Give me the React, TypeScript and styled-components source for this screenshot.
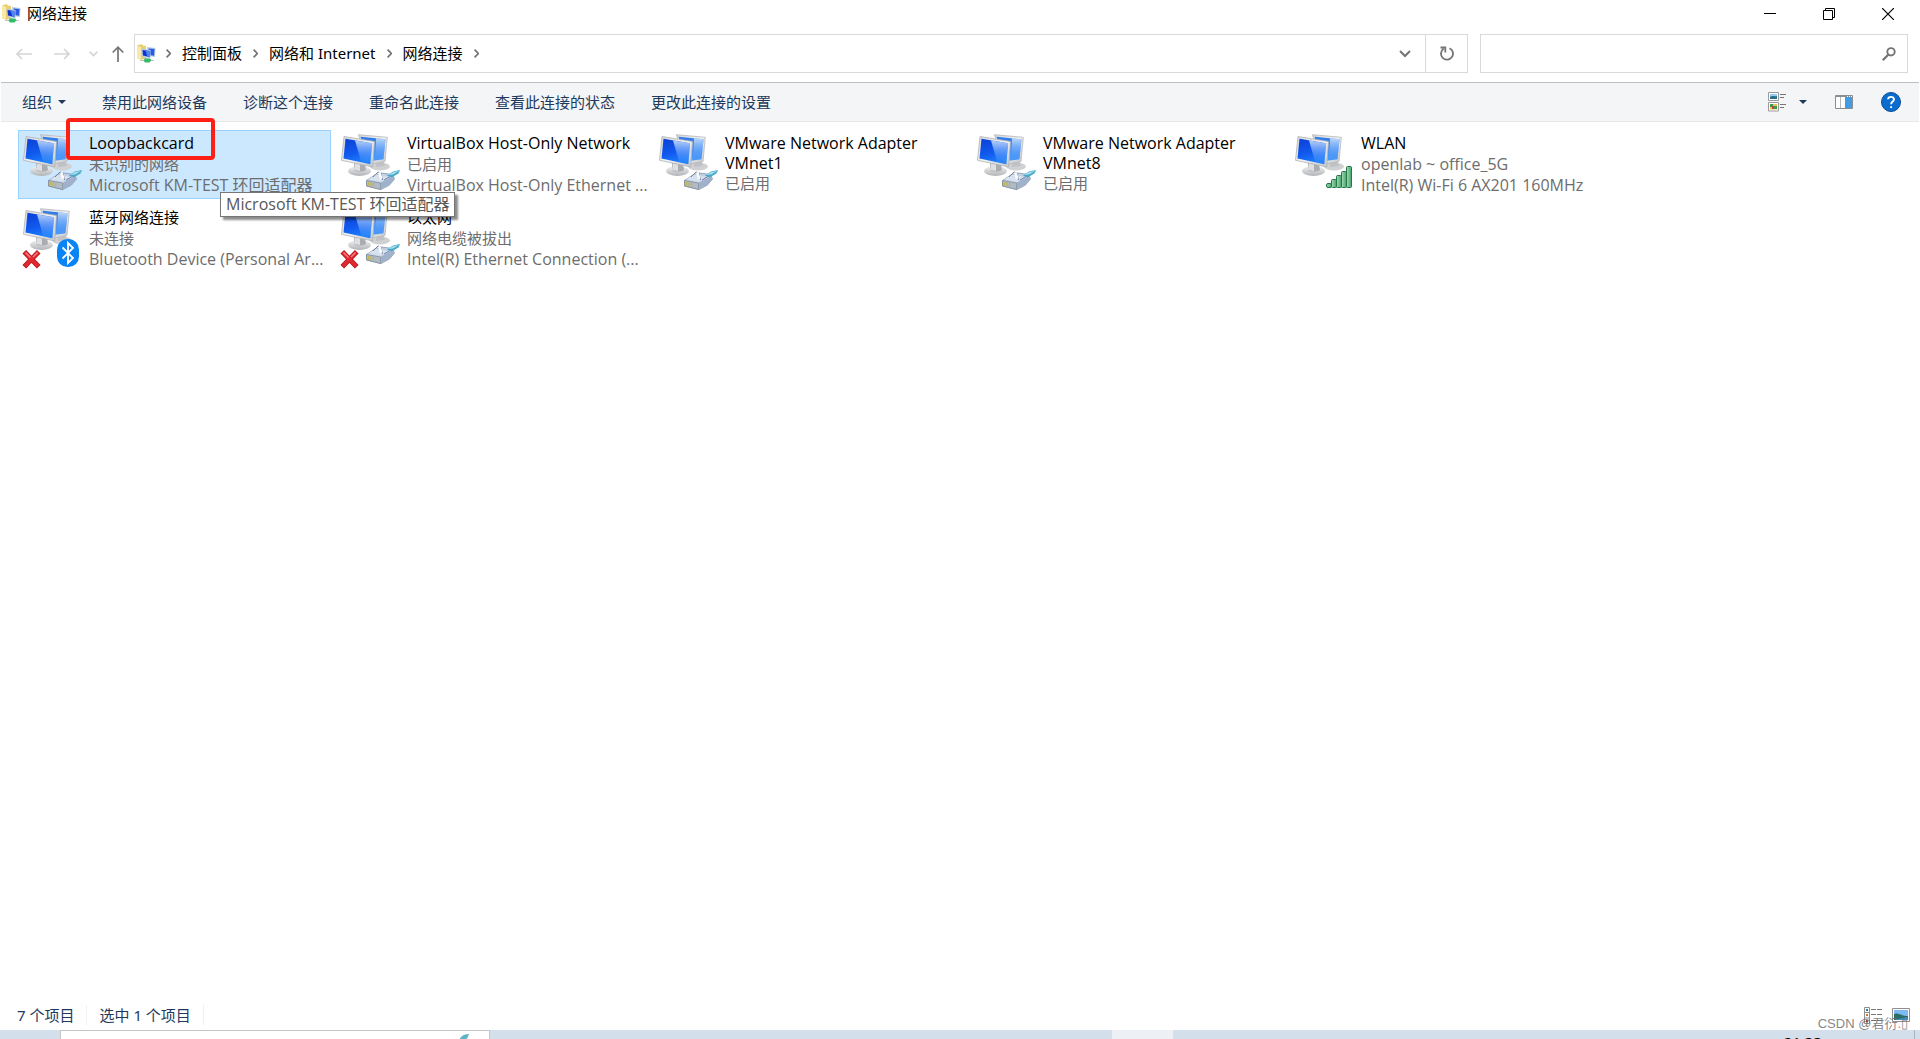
import React from "react";
import styled, { createGlobalStyle, css } from "styled-components";

const FONT = '"Noto Sans", "Noto Sans CJK SC", sans-serif';
const LATIN_FONT = '"Open Sans", "Noto Sans CJK SC", sans-serif';

const GlobalStyle = createGlobalStyle`
  *, *::before, *::after { box-sizing: border-box; }
  body { margin: 0; background: #fff; overflow: hidden; }
  button, input { font: inherit; color: inherit; }
`;

const Window = styled.div`
  display: flex;
  flex-direction: column;
  height: 100vh;
  font-family: ${FONT};
  font-size: 15px;
  line-height: 21px;
  color: #000;
  background: #fff;
`;

const bareButton = css`
  display: inline-flex;
  align-items: center;
  justify-content: center;
  padding: 0;
  border: 0;
  background: transparent;
  white-space: nowrap;
`;

/* Title bar */

const TitleBar = styled.header`
  display: flex;
  align-items: flex-start;
  justify-content: space-between;
  height: 29px;
`;

const Title = styled.h1`
  display: flex;
  align-items: center;
  gap: 6px;
  height: 27px;
  margin: 0;
  padding-left: 2px;
  font-size: 15px;
  font-weight: 400;
`;

const WindowControls = styled.div`
  display: flex;
  padding-right: 3px;
`;

const WindowButton = styled.button`
  ${bareButton}
  width: 59px;
  height: 28px;
`;

/* Address row */

const AddressRow = styled.nav`
  display: flex;
  align-items: stretch;
  gap: 4px;
  padding: 5px 12px 9px 8px;
`;

const HistoryButton = styled.button<{ $width: number }>`
  ${bareButton}
  width: ${(p) => p.$width}px;
`;

const AddressBox = styled.div`
  display: flex;
  flex: 1;
  align-items: center;
  height: 39px;
  margin-right: 8px;
  padding-left: 2px;
  border: 1px solid #d9d9d9;
`;

const Crumbs = styled.ol`
  display: flex;
  flex: 1;
  align-items: center;
  gap: 11px;
  margin: 0;
  padding: 0 0 0 10px;
  list-style: none;
`;

const Crumb = styled.li`
  display: flex;
  align-items: center;
  gap: 11px;
`;

const CrumbButton = styled.button`
  ${bareButton}
`;

const AddressButton = styled.button<{ $divided?: boolean }>`
  ${bareButton}
  width: ${(p) => (p.$divided ? 42 : 40)}px;
  height: 37px;
  border-left: ${(p) => (p.$divided ? "1px solid #d9d9d9" : "0")};
`;

const SearchBox = styled.label`
  display: flex;
  flex: 0 1 428px;
  align-items: center;
  padding: 0 11px;
  border: 1px solid #d9d9d9;
`;

const SearchInput = styled.input`
  flex: 1;
  min-width: 0;
  border: 0;
  outline: 0;
  background: transparent;
`;

/* Command bar */

const CommandBar = styled.div`
  display: flex;
  align-items: center;
  justify-content: space-between;
  height: 40px;
  margin: 0 1px;
  padding: 0 18px 0 21px;
  border-top: 1px solid #bfbfbf;
  border-bottom: 1px solid #e5e7ea;
  background: #f4f5f7;
  color: #1e395b;
`;

const CommandGroup = styled.div<{ $gap: number }>`
  display: flex;
  align-items: center;
  gap: ${(p) => p.$gap}px;
`;

const CommandButton = styled.button`
  ${bareButton}
  gap: 6px;
`;

/* Connection list */

const Content = styled.main`
  flex: 1;
  min-height: 0;
  padding: 8px 18px;
`;

const ConnectionGrid = styled.ul`
  display: grid;
  grid-template-columns: repeat(auto-fill, 313px);
  gap: 5px;
  margin: 0;
  padding: 0;
  list-style: none;
`;

const ConnectionCell = styled.li`
  position: relative;
`;

const Connection = styled.button<{ $selected?: boolean }>`
  display: flex;
  align-items: flex-start;
  gap: 5px;
  width: 100%;
  height: 69px;
  padding: 2px 0 0 3px;
  border: 1px solid ${(p) => (p.$selected ? "#99d1ff" : "transparent")};
  background: ${(p) => (p.$selected ? "#cce8ff" : "transparent")};
  text-align: left;
`;

const ConnectionText = styled.span`
  display: block;
  width: 236px;
`;

const latinLine = css<{ $latin: boolean }>`
  font-family: ${(p) => (p.$latin ? LATIN_FONT : FONT)};
  font-size: ${(p) => (p.$latin ? 16 : 15)}px;
`;

const ConnectionName = styled.span<{ $latin: boolean }>`
  ${latinLine}
  display: block;
  min-height: 21px;
  line-height: 20px;
`;

const ConnectionDetail = styled.span<{ $latin: boolean }>`
  ${latinLine}
  display: block;
  line-height: 21px;
  color: #6d6d6d;
  white-space: nowrap;
`;

const Highlight = styled.span`
  position: absolute;
  top: -12px;
  left: 48px;
  z-index: 1;
  width: 149px;
  height: 42px;
  border: 4px solid #ff2015;
  border-radius: 4px;
  pointer-events: none;
`;

const Tooltip = styled.span`
  position: absolute;
  top: 62px;
  left: 202px;
  z-index: 2;
  padding: 0 4px 1px 5px;
  border: 1px solid #767676;
  background: #fff;
  box-shadow: 3px 3px 2px rgba(0, 0, 0, 0.45);
  color: #575757;
  font-family: ${LATIN_FONT};
  font-size: 16px;
  line-height: 22px;
  white-space: nowrap;
`;

/* Status bar and the strip of desktop taskbar under the window */

const StatusBar = styled.footer`
  position: relative;
  display: flex;
  align-items: center;
  justify-content: space-between;
  height: 30px;
  padding: 0 10px 0 17px;
  color: #1e395b;
`;

const StatusText = styled.span`
  padding-right: 12px;
  margin-right: 12px;
  border-right: 1px solid #f0f1f3;
  line-height: 14px;
`;

const Watermark = styled.span`
  position: absolute;
  right: 12px;
  bottom: -4px;
  font-family: "Liberation Sans", "Noto Sans CJK SC", sans-serif;
  font-size: 13px;
  color: rgba(110, 110, 110, 0.85);
  white-space: nowrap;
`;

const Taskbar = styled.div`
  display: flex;
  height: 9px;
  padding: 0 5px 0 60px;
  overflow: hidden;
  background: #d3dfeb;
`;

const TaskbarSearch = styled.div`
  display: flex;
  justify-content: flex-end;
  width: 430px;
  padding: 3px 20px 0 0;
  border: 1px solid #c6c6c6;
  border-bottom: 0;
  background: #fff;
`;

const TaskbarActive = styled.div`
  width: 61px;
  margin-left: 622px;
  background: #edf1f6;
`;

const TaskbarClock = styled.time`
  margin-left: auto;
  padding: 2px 92px 0 0;
  border-right: 1px solid #a9b5c2;
`;

/* Drawings */

const FolderNetIcon = () => (
  <svg width="19" height="19" viewBox="0 0 19 19" aria-hidden="true">
    <path d="M0 1.500 4.500 0 6 1.500 9 2v12l-5 2-4-2z" fill="#e9cf6d" />
    <path d="M0 1.500 4 3v13l-4-2z" fill="#f8eaa5" />
    <path d="m10 3 8.500 1-.5 9-7-1z" fill="#b8cbe3" />
    <path d="m11.500 4.500 6 .6-.4 6.700-5-.7z" fill="#2b5be0" />
    <path d="m4.500 4.500 9 1.500v8.500l-8.500-2z" fill="#b9cbe6" />
    <path d="m5.500 6 7 1v6l-6.500-1.500z" fill="#1030cc" />
    <path d="m8.500 6.500 4 .5v6l-2.200-.5z" fill="#4d86f0" />
    <path d="m7 13.500 4 1-1 1.500-4-1z" fill="#bcc4cd" />
    <path d="M3 16h14v1H3z" fill="#b9c8c0" />
    <path d="M8 14.500h5l1.500 1.500-2 2.500H8L6.500 16.500z" fill="#35b96a" />
  </svg>
);

const Chevron = () => (
  <svg width="5" height="9" viewBox="0 0 5 9" fill="none" stroke="#707070" strokeWidth="1.6" aria-hidden="true">
    <path d="M.6.6 4.300 4.500.6 8.400" />
  </svg>
);

const Triangle = () => (
  <svg width="8" height="4" viewBox="0 0 8 4" aria-hidden="true">
    <path d="M0 0h8L4 4z" fill="#1e395b" />
  </svg>
);

const Arrow = ({ back }: { back?: boolean }) => (
  <svg width="16" height="12" viewBox="0 0 16 12" fill="none" stroke="#d5d5d5" strokeWidth="1.600" aria-hidden="true">
    <path d={back ? "M16 6H1M6 1 1 6l5 5" : "M0 6h15M10 1l5 5-5 5"} />
  </svg>
);

const PlugIcon = () => (
  <g>
    <path d="m26.500 47.500 9-6 6-1.500 11 1.500 2 4.500-5 6-8.500 4.500-14.500-3.500z" fill="#c3cfe2" stroke="#8796ad" strokeWidth=".8" />
    <path d="m41 49.500 12.500-6.500.5 3.500-5 5.500-8 4z" fill="#a0b1cc" />
    <path d="m28 46.500 8-5 13 2.500-8 5z" fill="#d8e1ee" />
    <path d="m26.500 47.500 14 2.500v6.500l-14-3.500z" fill="#b0bbc5" stroke="#7c8997" strokeWidth=".7" />
    <path d="M28.500 49v3.500M31 49.500v3.500M33.500 50v3.500" stroke="#c2b44a" strokeWidth="1.300" />
    <path d="m33 44 5-5 3 1 1.500 7M44 47l6-3.500" fill="none" stroke="#6f83a2" strokeWidth="1" />
    <path d="m38 40 2.500-1.500 2 6.500-2.500 2z" fill="#f7f9fc" />
    <path d="M47 42.500 53 38.500l7-1.500-1.500 3.500-7 4z" fill="#4aa9c9" />
    <path d="m48 42 5.500-3 5.500-1-6 3.500z" fill="#a8e0ec" />
  </g>
);

const SignalIcon = () => (
  <g fill="url(#signal)" stroke="#27754a" strokeWidth="1">
    <rect x="32.500" y="50.500" width="5" height="4" rx="1.500" />
    <rect x="37.500" y="46.500" width="5" height="8" rx="1" />
    <rect x="42.500" y="42.500" width="5" height="12" rx="1" />
    <rect x="47.500" y="38.500" width="5" height="16" rx="1" />
    <rect x="52.500" y="33.500" width="5" height="21" rx="1" />
  </g>
);

const BluetoothIcon = () => (
  <g>
    <rect x="35" y="32" width="22" height="28" rx="10.500" fill="#0a84f5" />
    <path d="m40.500 40.500 10.500 10.500-5 5V36l5 5-10.500 10.500" fill="none" stroke="#fff" strokeWidth="1.800" />
  </g>
);

const CrossIcon = () => (
  <g strokeLinecap="square">
    <path d="m4 46.500 11 11.500M15 46.500 4 58" stroke="#b3161c" strokeWidth="5" />
    <path d="m4 46.500 11 11.500M15 46.500 4 58" stroke="#e0282e" strokeWidth="3.400" />
    <path d="m4 46 4 4M15 46l-3.500 3.500" stroke="#f07c80" strokeWidth="1.500" />
  </g>
);

type Badge = "plug" | "signal" | "bluetooth";

const ConnectionIcon = ({ badge, down }: { badge: Badge; down?: boolean }) => (
  <svg width="62" height="62" viewBox="0 0 62 62" style={{ flexShrink: 0 }} aria-hidden="true">
    <ellipse cx="40" cy="33.500" rx="10" ry="4" fill="#cfd1d3" />
    <path d="m36 27 7 0 2 6-9 1z" fill="#c0c2c5" />
    <path d="m18.300 1.700 29 2.600L45 28.500l-16 3z" fill="url(#frame)" stroke="#b5b8bb" strokeWidth=".8" />
    <path d="m20.500 3.800 25 2.500-2 20-14 2z" fill="url(#backScreen)" />
    <path d="m36 5.300 9.500 1-2 20-8.500 1z" fill="url(#glare)" />
    <ellipse cx="19.500" cy="38" rx="11.500" ry="5" fill="url(#stand)" />
    <path d="m14 29 11 2 1 6c-3 2-10 2-12 0z" fill="#a9acb0" />
    <path d="m15 30 5 1v7l-6-1z" fill="#dedfe1" />
    <path d="M4 3.500 34.500 8.500l-1.800 25.500L1.500 27.300z" fill="url(#frame)" stroke="#b0b3b6" strokeWidth=".8" />
    <path d="m5.500 5.800 26.500 4.500-1.700 21L3.500 25.500z" fill="url(#frontScreen)" />
    <path d="m15 7.400 17 2.900-1.700 21-9-2z" fill="url(#glare)" />
    {badge === "plug" && <PlugIcon />}
    {badge === "signal" && <SignalIcon />}
    {badge === "bluetooth" && <BluetoothIcon />}
    {down && <CrossIcon />}
  </svg>
);

const IconPaints = () => (
  <svg width="0" height="0" style={{ position: "absolute" }} aria-hidden="true">
    <defs>
      <linearGradient id="frame" x1="0" y1="0" x2="1" y2="1">
        <stop offset="0" stopColor="#d4d5d6" />
        <stop offset=".5" stopColor="#f1f1f1" />
        <stop offset="1" stopColor="#c3c5c8" />
      </linearGradient>
      <linearGradient id="stand" x1="0" y1="0" x2="0" y2="1">
        <stop offset="0" stopColor="#f2f2f2" />
        <stop offset="1" stopColor="#b1b3b6" />
      </linearGradient>
      <linearGradient id="frontScreen" x1="0" y1="0" x2=".3" y2="1">
        <stop offset="0" stopColor="#0a3fd6" />
        <stop offset=".6" stopColor="#1159ee" />
        <stop offset="1" stopColor="#1b7dfb" />
      </linearGradient>
      <linearGradient id="backScreen" x1="0" y1="0" x2="0" y2="1">
        <stop offset="0" stopColor="#2f78ea" />
        <stop offset="1" stopColor="#4d9dfa" />
      </linearGradient>
      <linearGradient id="glare" x1="0" y1="0" x2="0" y2="1">
        <stop offset="0" stopColor="#d5e9ff" stopOpacity=".85" />
        <stop offset="1" stopColor="#3d8dfb" stopOpacity=".2" />
      </linearGradient>
      <linearGradient id="signal" x1="0" y1="0" x2="1" y2="0">
        <stop offset="0" stopColor="#a5dcb5" />
        <stop offset="1" stopColor="#43a368" />
      </linearGradient>
    </defs>
  </svg>
);

const ViewIcon = () => (
  <svg width="19" height="20" viewBox="0 0 19 20" aria-hidden="true">
    <g fill="#fff" stroke="#9a9a9a">
      <path d="M.5.500h10v8H.500zM.5 10.500h10v8.500H.500z" />
    </g>
    <path d="M2 2h7v5H2z" fill="#9cc9ef" />
    <path d="M2 5c3-2 4 0 7-1v3H2z" fill="#276d8c" />
    <path d="M2 12h7v5.500H2z" fill="#e8c15c" />
    <path d="M2 12h3v3H2zM6 14h3v3H6z" fill="#3d9a51" />
    <path d="M4 14h2v3H4z" fill="#c3453b" />
    <path d="M12 2.500h6M12 5.500h4M12 12.500h6M12 15.500h4" stroke="#777" />
  </svg>
);

const PaneIcon = () => (
  <svg width="18" height="14" viewBox="0 0 18 14" aria-hidden="true">
    <path d="M.5.500h17v13H.500z" fill="#fff" stroke="#8a8d91" />
    <path d="M1 1.500h16" stroke="#8a8d91" />
    <path d="M5.500 2v11" stroke="#b5b8bb" />
    <path d="M10 2h7v11h-7z" fill="#429ce3" />
    <path d="M12 1.500h1M14 1.500h1M16 1.500h1" stroke="#fff" />
  </svg>
);

const HelpIcon = () => (
  <svg width="20" height="20" viewBox="0 0 20 20" fill="none" aria-hidden="true">
    <circle cx="10" cy="10" r="9.500" fill="#0a6cce" stroke="#0b4f94" />
    <path d="M7 7.300C7.200 4 13 4 13 7.300c0 2.200-2.900 2.400-2.900 5M10.100 14.200v1.900" stroke="#fff" strokeWidth="1.900" />
  </svg>
);

const DetailsIcon = () => (
  <svg width="18" height="17" viewBox="0 0 18 17" aria-hidden="true">
    <path d="M.5.500h5v16h-5zM.5 5.500h5M.5 11h5" fill="#fff" stroke="#8f8f8f" />
    <path d="M2 2h2v2H2z" fill="#2a7c9c" />
    <path d="M2 7h2v2H2z" fill="#d8762f" />
    <path d="M2 13h2v2H2z" fill="#c2302e" />
    <path d="M7 2.500h5M13 2.500h5M7 7.500h5M13 7.500h5M7 13.500h5M13 13.500h5" stroke="#777" />
  </svg>
);

const LargeIconsIcon = () => (
  <svg width="18" height="14" viewBox="0 0 18 14" aria-hidden="true">
    <path d="M.5.500h17v13H.500z" fill="#fff" stroke="#8f8f8f" />
    <path d="M2 2h14v10H2z" fill="#7db9f3" />
    <path d="M2 6c4-2 7 2 14 2v4H2z" fill="#2c6e66" />
    <path d="m2 12 14-3v3z" fill="#3e8fc8" />
  </svg>
);

/* Data */

type ConnectionData = {
  name: string;
  details: string[];
  badge: Badge;
  down?: boolean;
  selected?: boolean;
  tooltip?: string;
};

const connections: ConnectionData[] = [
  {
    name: "Loopbackcard",
    details: ["未识别的网络", "Microsoft KM-TEST 环回适配器"],
    badge: "plug",
    selected: true,
    tooltip: "Microsoft KM-TEST 环回适配器",
  },
  {
    name: "VirtualBox Host-Only Network",
    details: ["已启用", "VirtualBox Host-Only Ethernet ..."],
    badge: "plug",
  },
  { name: "VMware Network Adapter VMnet1", details: ["已启用"], badge: "plug" },
  { name: "VMware Network Adapter VMnet8", details: ["已启用"], badge: "plug" },
  { name: "WLAN", details: ["openlab ~ office_5G", "Intel(R) Wi-Fi 6 AX201 160MHz"], badge: "signal" },
  {
    name: "蓝牙网络连接",
    details: ["未连接", "Bluetooth Device (Personal Ar..."],
    badge: "bluetooth",
    down: true,
  },
  {
    name: "以太网",
    details: ["网络电缆被拔出", "Intel(R) Ethernet Connection (..."],
    badge: "plug",
    down: true,
  },
];

const crumbs = ["控制面板", "网络和 Internet", "网络连接"];
const commands = ["禁用此网络设备", "诊断这个连接", "重命名此连接", "查看此连接的状态", "更改此连接的设置"];

/* Latin glyphs run small beside the Chinese ones, so such lines are set a size up. */
const isLatin = (text: string) => /^[a-z]/i.test(text);

export default function App() {
  return (
    <>
      <GlobalStyle />
      <IconPaints />
      <Window>
        <TitleBar>
          <Title>
            <FolderNetIcon />
            网络连接
          </Title>
          <WindowControls>
            <WindowButton aria-label="最小化">
              <svg width="12" height="12" viewBox="0 0 12 12" stroke="#000">
                <path d="M0 5.500h12" />
              </svg>
            </WindowButton>
            <WindowButton aria-label="还原">
              <svg width="12" height="12" viewBox="0 0 12 12" fill="none" stroke="#000">
                <path d="M.5 2.500h9v9h-9zM2.500 2.500v-2h9v9h-2" />
              </svg>
            </WindowButton>
            <WindowButton aria-label="关闭">
              <svg width="12" height="12" viewBox="0 0 12 12" stroke="#000" strokeWidth="1.200">
                <path d="m0 0 12 12M12 0 0 12" />
              </svg>
            </WindowButton>
          </WindowControls>
        </TitleBar>

        <AddressRow aria-label="地址栏">
          <HistoryButton $width={32} aria-label="后退">
            <Arrow back />
          </HistoryButton>
          <HistoryButton $width={36} aria-label="前进">
            <Arrow />
          </HistoryButton>
          <HistoryButton $width={18} aria-label="最近浏览的位置">
            <svg width="9" height="6" viewBox="0 0 9 6" fill="none" stroke="#d5d5d5" strokeWidth="1.600">
              <path d="m.6.6 3.900 4L8.400.6" />
            </svg>
          </HistoryButton>
          <HistoryButton $width={24} aria-label="上移">
            <svg width="12" height="16" viewBox="0 0 12 16" fill="none" stroke="#747474" strokeWidth="1.700">
              <path d="M6 16V1.200M.7 6.500 6 1.200l5.300 5.300" />
            </svg>
          </HistoryButton>
          <AddressBox>
            <FolderNetIcon />
            <Crumbs>
              <Chevron />
              {crumbs.map((crumb) => (
                <Crumb key={crumb}>
                  <CrumbButton>{crumb}</CrumbButton>
                  <Chevron />
                </Crumb>
              ))}
            </Crumbs>
            <AddressButton aria-label="以前的位置">
              <svg width="12" height="8" viewBox="0 0 12 8" fill="none" stroke="#747474" strokeWidth="2">
                <path d="m1 1 5 5 5-5" />
              </svg>
            </AddressButton>
            <AddressButton $divided aria-label="刷新">
              <svg width="14" height="15" viewBox="0 0 14 15" fill="none" stroke="#747474" strokeWidth="1.800">
                <path d="M9.500 2.200A6 6 0 1 1 3.600 2.700M.5 1.500h4.800v5" />
              </svg>
            </AddressButton>
          </AddressBox>
          <SearchBox>
            <SearchInput type="search" aria-label="搜索网络连接" />
            <svg width="14" height="14" viewBox="0 0 14 14" fill="none" stroke="#747474" aria-hidden="true">
              <circle cx="9" cy="4.800" r="3.700" strokeWidth="1.900" />
              <path d="M6.400 7.500.8 13.200" strokeWidth="2.200" />
            </svg>
          </SearchBox>
        </AddressRow>

        <CommandBar role="toolbar">
          <CommandGroup $gap={36}>
            <CommandButton>
              组织
              <Triangle />
            </CommandButton>
            {commands.map((command) => (
              <CommandButton key={command}>{command}</CommandButton>
            ))}
          </CommandGroup>
          <CommandGroup $gap={28}>
            <CommandGroup $gap={12}>
              <CommandButton aria-label="更改视图">
                <ViewIcon />
              </CommandButton>
              <CommandButton aria-label="更多选项">
                <Triangle />
              </CommandButton>
            </CommandGroup>
            <CommandButton aria-label="显示预览窗格">
              <PaneIcon />
            </CommandButton>
            <CommandButton aria-label="获取帮助">
              <HelpIcon />
            </CommandButton>
          </CommandGroup>
        </CommandBar>

        <Content>
          <ConnectionGrid>
            {connections.map((item) => (
              <ConnectionCell key={item.name}>
                <Connection $selected={item.selected}>
                  <ConnectionIcon badge={item.badge} down={item.down} />
                  <ConnectionText>
                    <ConnectionName $latin={isLatin(item.name)}>{item.name}</ConnectionName>
                    {item.details.map((detail) => (
                      <ConnectionDetail key={detail} $latin={isLatin(detail)}>
                        {detail}
                      </ConnectionDetail>
                    ))}
                  </ConnectionText>
                </Connection>
                {item.selected && <Highlight />}
                {item.tooltip && <Tooltip role="tooltip">{item.tooltip}</Tooltip>}
              </ConnectionCell>
            ))}
          </ConnectionGrid>
        </Content>

        <StatusBar>
          <div>
            <StatusText>7 个项目</StatusText>
            <StatusText>选中 1 个项目</StatusText>
          </div>
          <CommandGroup $gap={10}>
            <CommandButton aria-label="详细信息">
              <DetailsIcon />
            </CommandButton>
            <CommandButton aria-label="大缩略图">
              <LargeIconsIcon />
            </CommandButton>
          </CommandGroup>
          <Watermark>CSDN @君衍.▯</Watermark>
        </StatusBar>

        <Taskbar>
          <TaskbarSearch>
            <svg width="10" height="6" viewBox="0 0 10 6" aria-hidden="true">
              <path d="M0 6C2 2 5 0 10 0 9 3 8 5 6 6z" fill="#5fb4c8" />
            </svg>
          </TaskbarSearch>
          <TaskbarActive />
          <TaskbarClock>21:33</TaskbarClock>
        </Taskbar>
      </Window>
    </>
  );
}
